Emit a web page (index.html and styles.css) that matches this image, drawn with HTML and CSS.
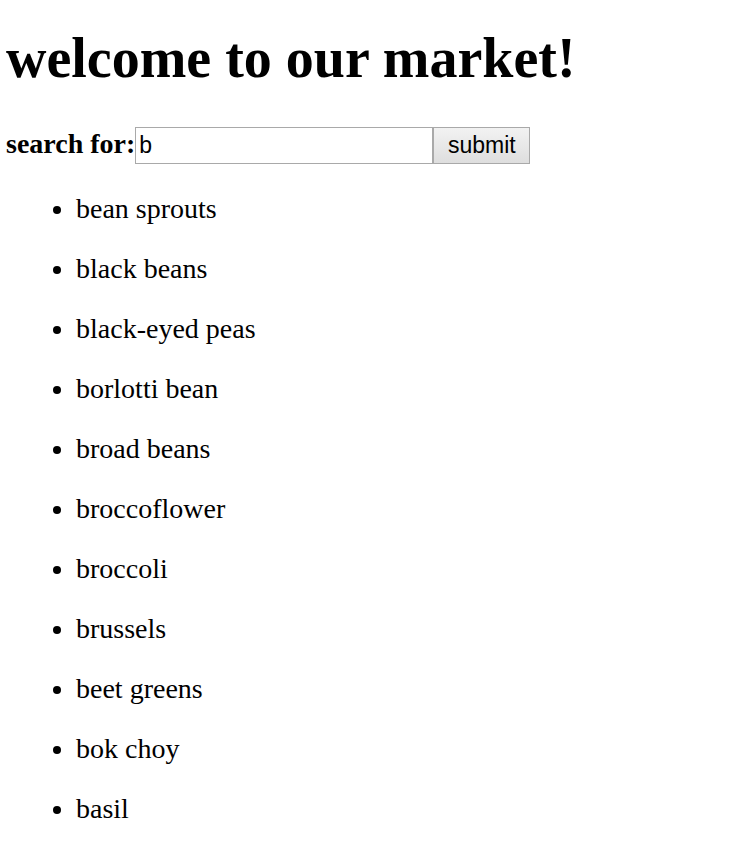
FILE: index.html
```html
<!DOCTYPE html>
<html>
<head>
<meta charset="utf-8">
<link rel="stylesheet" href="styles.css">
</head>
<body>
<h1 class="title">welcome to our market!</h1>
<form class="search">
  <label class="search-label" for="q">search for:</label><input class="search-input" id="q" type="text" value="b"><button class="search-btn" type="button">submit</button>
</form>
<ul class="items">
  <li>bean sprouts</li>
  <li>black beans</li>
  <li>black-eyed peas</li>
  <li>borlotti bean</li>
  <li>broad beans</li>
  <li>broccoflower</li>
  <li>broccoli</li>
  <li>brussels</li>
  <li>beet greens</li>
  <li>bok choy</li>
  <li>basil</li>
</ul>
</body>
</html>
```
FILE: styles.css
```css
html, body {
  background: #fff;
}
body {
  margin: 0;
  padding: 0 6px;
  font-family: "Liberation Serif", "Times New Roman", serif;
  color: #000;
}
.title {
  font-size: 56px;
  font-weight: bold;
  margin: 30px 0 0;
  line-height: 56px;
}
.search {
  display: flex;
  align-items: center;
  margin-top: 41px;
  height: 37px;
}
.search-label {
  align-self: flex-start;
  font-size: 28px;
  line-height: 34px;
  font-weight: bold;
}
.search-input {
  box-sizing: border-box;
  width: 298px;
  height: 37px;
  margin: 0;
  border: 1px solid #a9a9a9;
  padding: 0 3px;
  font-family: "Liberation Sans", Arial, sans-serif;
  font-size: 23px;
  color: #000;
  outline: none;
}
.search-btn {
  box-sizing: border-box;
  height: 37px;
  width: 97px;
  margin: 0;
  border: 1px solid #a9a9a9;
  background: linear-gradient(#f2f2f2, #dedede);
  font-family: "Liberation Sans", Arial, sans-serif;
  font-size: 23px;
  color: #000;
  padding: 0;
}
.items {
  margin: 15px 0 0;
  padding-left: 70px;
  font-size: 28px;
}
.items li {
  line-height: 60px;
}
```
